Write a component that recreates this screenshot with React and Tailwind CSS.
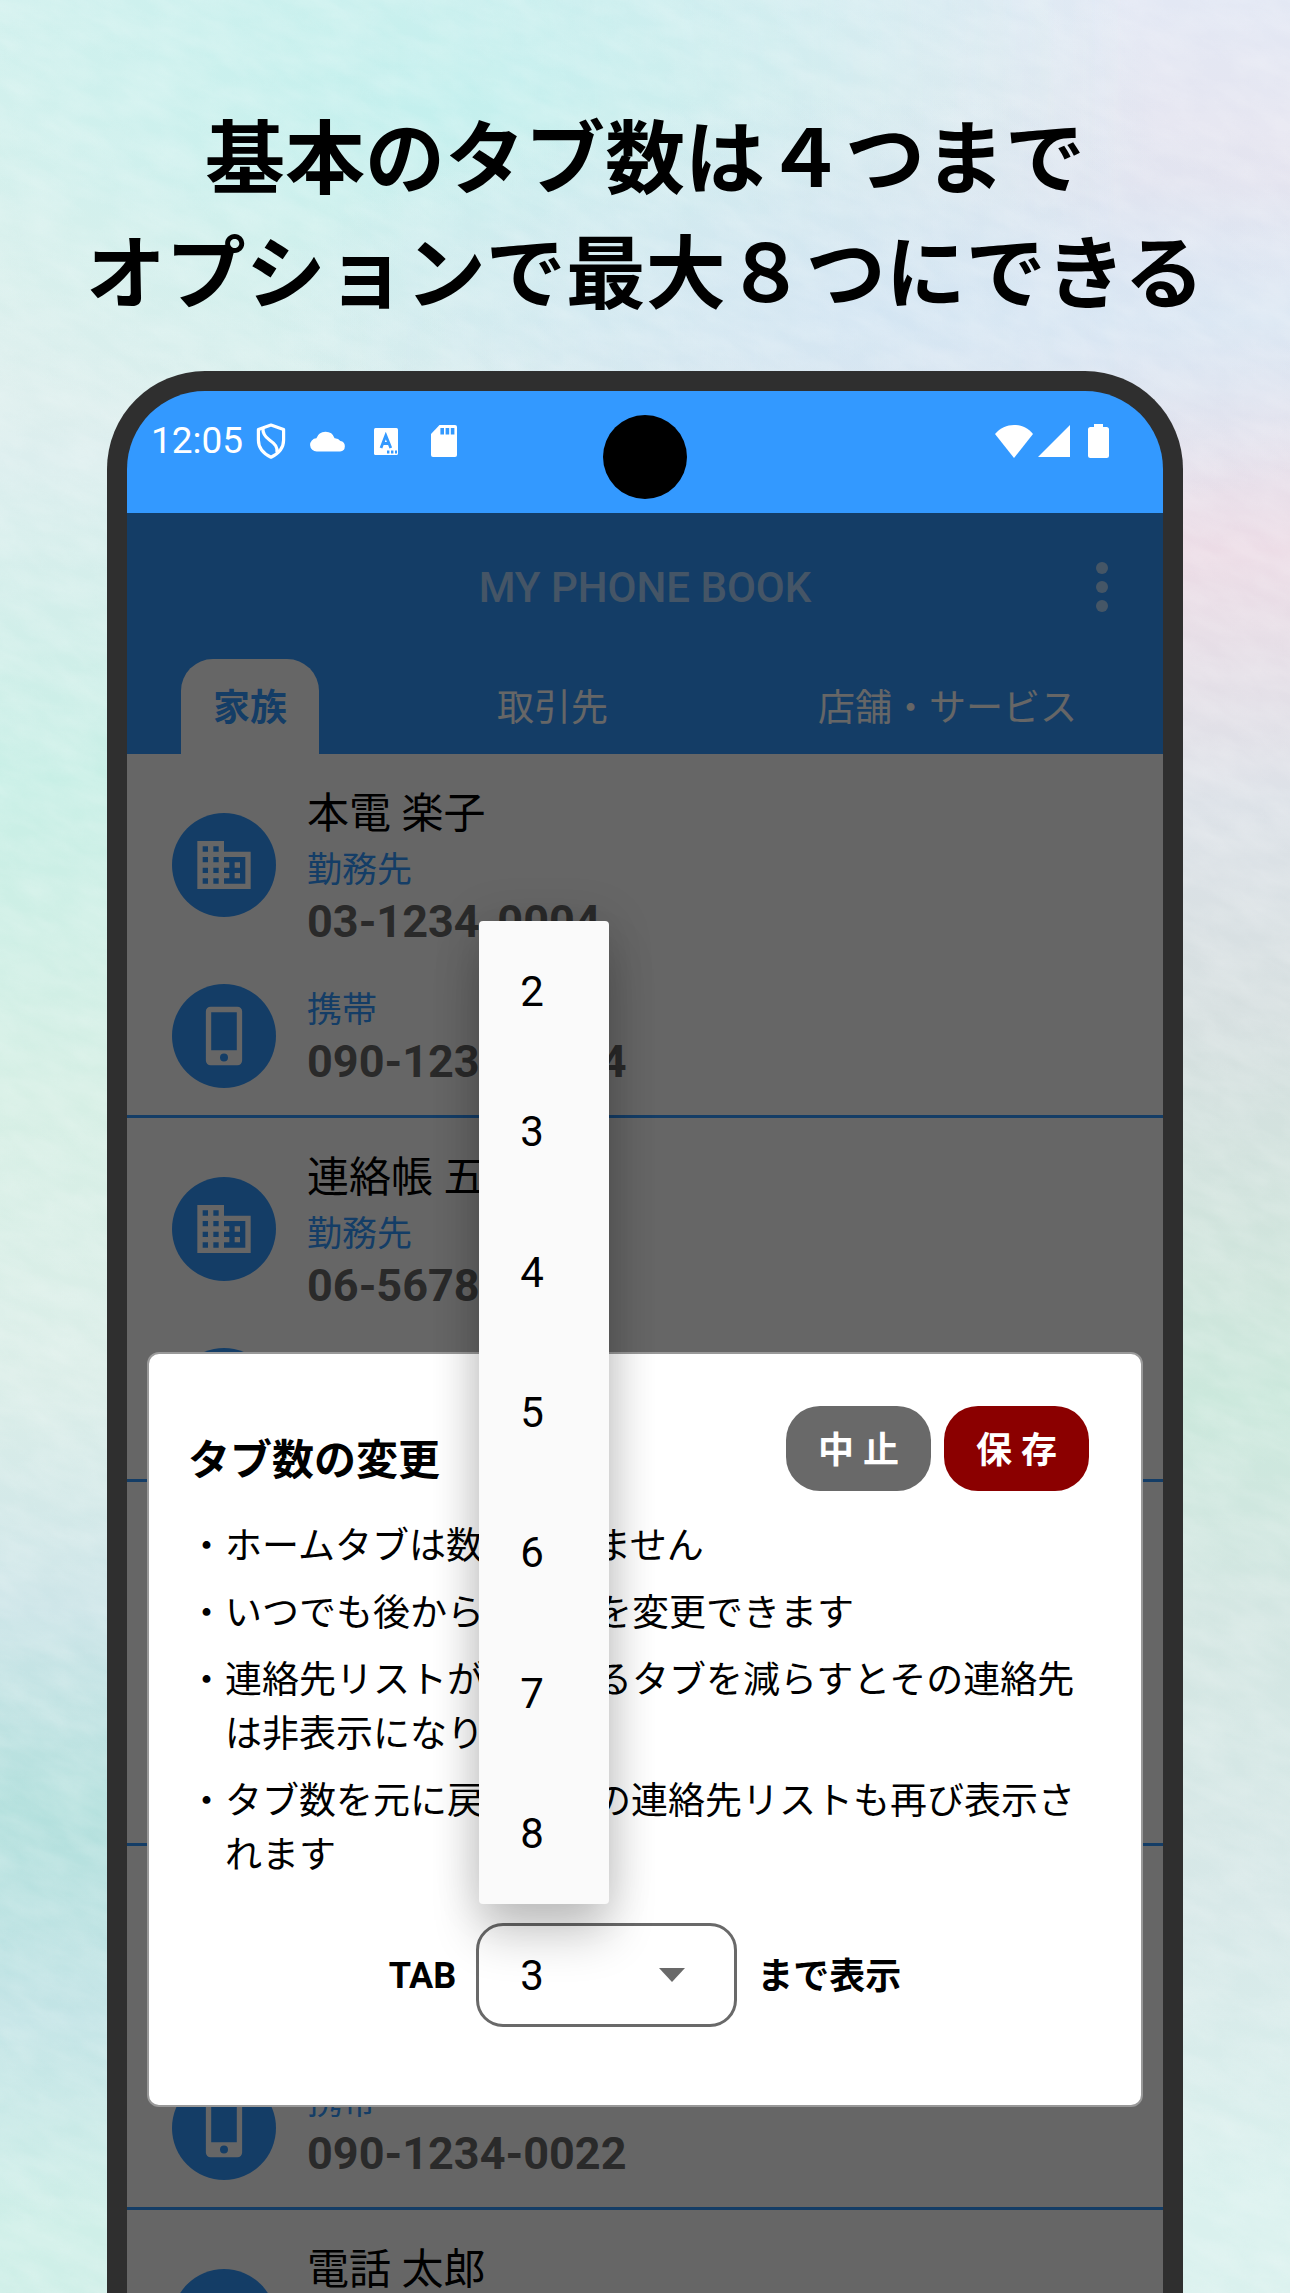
import React, { useState } from "react";
import { MdBusiness } from "react-icons/md";

const TABS = ["家族", "取引先", "店舗・サービス"];
const COUNTS = ["2", "3", "4", "5", "6", "7", "8"];
const CONTACTS = [
  { name: "本電 楽子", work: "03-1234-0004", mobile: "090-1234-0004" },
  { name: "連絡帳 五郎", work: "06-5678-0005", mobile: "090-1234-0005" },
  { name: "電話 花子", work: "03-1234-0011", mobile: "090-1234-0011" },
  { name: "本電 次郎", work: "03-1234-0022", mobile: "090-1234-0022" },
  { name: "電話 太郎", work: "03-1234-0033", mobile: "090-1234-0033" },
];
const NOTES = [
  "ホームタブは数に含みません",
  "いつでも後からタブ数を変更できます",
  "連絡先リストが存在するタブを減らすとその連絡先は非表示になります",
  "タブ数を元に戻すとその連絡先リストも再び表示されます",
];

function Backdrop() {
  return (
    <div aria-hidden="true" className="absolute inset-0 -z-10 overflow-hidden">
      <div className="absolute inset-0 bg-[linear-gradient(180deg,#d9f1ee_0%,#e0f0ec_10%,#dceeee_20%,#c8efe6_34%,#d6efe5_48%,#dceee9_60%,#cde5e8_70%,#b3e0dd_79%,#c3e4e6_88%,#cfefe8_97%)]" />
      <div className="absolute inset-0 bg-[linear-gradient(180deg,#e3e8f4_0%,#e6e4ef_8%,#dfe8f3_14%,#ecdce6_24%,#dde2e8_35%,#d6dfe0_44%,#cfe5dc_56%,#cbe8dc_61%,#d3e6e2_70%,#d7e8e8_83%,#daf1ee_96%)] [mask-image:linear-gradient(90deg,transparent_25%,black_88%)]" />
      <div className="absolute inset-x-0 top-0 h-[520px] bg-[radial-gradient(ellipse_at_34%_20%,#bdf0ee_0%,transparent_60%)] opacity-80" />
      <div className="absolute inset-x-0 top-0 h-[520px] bg-[radial-gradient(ellipse_at_68%_60%,#d2e4f3_0%,transparent_50%)] opacity-80" />
      <svg className="absolute inset-0 h-full w-full opacity-20">
        <filter id="paper">
          <feTurbulence type="fractalNoise" baseFrequency="0.02 0.05" numOctaves="4" seed="4" />
          <feColorMatrix values="0 0 0 0 1  0 0 0 0 1  0 0 0 0 1  1.6 0 0 0 -0.4" />
        </filter>
        <g transform="rotate(25)">
          <rect x="-200" y="-800" width="3200" height="3200" filter="url(#paper)" />
        </g>
      </svg>
    </div>
  );
}

function StatusBar() {
  return (
    <div className="relative flex h-[122px] shrink-0 items-start justify-between bg-[#3399ff] pt-[24px] pr-[54px] pl-[24px] text-white">
      <div className="flex h-[52px] items-center">
        <span className="text-[37px]">12:05</span>
        <svg viewBox="0 0 30 36" className="ml-[13px] h-[36px] w-[30px]" fill="none" stroke="currentColor" strokeWidth="3.2" strokeLinejoin="round">
          <path d="M15 2 27.6 6.4V17c0 7.400-4.600 13.400-12.600 17.200C7 30.400 2.400 24.400 2.400 17V6.400Z" />
          <path d="M7 5c-.5 5.500 1.500 8.500 6.500 12 6 4.200 8 7 7.500 12.500" />
        </svg>
        <svg viewBox="0 0 36 22" className="ml-[24px] h-[22px] w-[36px]" fill="currentColor">
          <path d="M7 21.500a6.600 6.600 0 0 1-.6-13.200A9.600 9.600 0 0 1 24.600 8.200 6.800 6.800 0 0 1 30.400 11a5.300 5.300 0 0 1-.3 10.500Z" />
        </svg>
        <svg viewBox="0 0 24 27" className="ml-[28px] h-[27px] w-[24px]">
          <rect width="24" height="27" rx="1.500" fill="currentColor" />
          <g fill="none" stroke="#3399ff" strokeWidth="2.800">
            <path d="M7 20 11.800 7.500 16.800 20M8.600 15.500h6.600" />
            <path d="M13 24h2.400M17 24h2.400M21 24h2" />
          </g>
        </svg>
        <svg viewBox="0 0 26 32" className="ml-[33px] h-[32px] w-[26px]">
          <path d="M8.500 0H24a2 2 0 0 1 2 2v28a2 2 0 0 1-2 2H2a2 2 0 0 1-2-2V9Z" fill="currentColor" />
          <path d="M11.200 3v6.500M16.400 3v6.500M21.600 3v6.500" stroke="#3399ff" strokeWidth="3.600" />
        </svg>
      </div>
      <div className="absolute top-[24px] left-1/2 size-[84px] -translate-x-1/2 rounded-full bg-black" />
      <div className="flex h-[52px] items-center">
        <svg viewBox="0 0 38 33" className="h-[33px] w-[38px]" fill="currentColor">
          <path d="M0 9C5 3 12 0 19 0s14 3 19 9L19 33Z" />
        </svg>
        <svg viewBox="0 0 32 32" className="ml-[5px] size-[32px]" fill="currentColor">
          <path d="M32 0v32H0Z" />
        </svg>
        <svg viewBox="0 0 21 34" className="ml-[18px] h-[34px] w-[21px]" fill="currentColor">
          <path d="M6 0h9v3h3.500A2.500 2.500 0 0 1 21 5.500v26a2.500 2.500 0 0 1-2.500 2.500h-16A2.500 2.500 0 0 1 0 31.500v-26A2.500 2.500 0 0 1 2.500 3H6Z" />
        </svg>
      </div>
    </div>
  );
}

function PhoneGlyph() {
  return (
    <svg viewBox="0 0 24 24" className="size-[64px]" fill="currentColor">
      <path
        fillRule="evenodd"
        d="M7 1h10a1.800 1.800 0 0 1 1.800 1.800v18.400A1.800 1.800 0 0 1 17 23H7a1.800 1.800 0 0 1-1.800-1.800V2.800A1.800 1.800 0 0 1 7 1ZM7.200 3.100v14.200h9.600V3.100ZM12 18.600a1.500 1.500 0 1 0 0 3 1.500 1.500 0 0 0 0-3Z"
      />
    </svg>
  );
}

function Badge({ children }) {
  return (
    <span className="flex size-[104px] shrink-0 items-center justify-center rounded-full bg-[#3399ff] text-white">
      {children}
    </span>
  );
}

function Contact({ name, work, mobile }) {
  return (
    <li className="border-b-3 border-[#3399ff] pt-[30px] pb-[27px] pl-[45px]">
      <div className="flex items-center gap-[31px]">
        <Badge>
          <MdBusiness className="size-[64px]" />
        </Badge>
        <div>
          <h2 className="text-[42px] leading-[60px] text-black">{name}</h2>
          <p className="text-[35px] leading-[54px] text-[#3399ff]">勤務先</p>
          <p className="text-[45px] leading-[48px] font-bold text-[#696969]">{work}</p>
        </div>
      </div>
      <div className="mt-[38px] flex items-start gap-[31px]">
        <Badge>
          <PhoneGlyph />
        </Badge>
        <div>
          <p className="text-[35px] leading-[54px] text-[#3399ff]">携帯</p>
          <p className="text-[45px] leading-[48px] font-bold text-[#696969]">{mobile}</p>
        </div>
      </div>
    </li>
  );
}

function CountPicker({ value, onChange }) {
  return (
    <div className="relative">
      <select
        id="tab-count"
        value={value}
        onChange={(e) => onChange(e.target.value)}
        className="block h-[104px] w-[261px] appearance-none rounded-[27px] border-3 border-[#696969] bg-white pl-[41px] text-[42px] text-black"
      >
        {COUNTS.map((c) => (
          <option key={c}>{c}</option>
        ))}
      </select>
      <svg viewBox="0 0 26 14" className="pointer-events-none absolute top-[45px] right-[52px] h-[14px] w-[26px]" fill="#696969">
        <path d="M0 0h26L13 14Z" />
      </svg>
      <div
        role="listbox"
        aria-label="タブ数"
        className="absolute bottom-full left-[3px] mb-[19px] grid h-[983px] w-[130px] auto-rows-fr rounded-[4px] bg-[#fafafa] shadow-[0_0_48px_rgba(0,0,0,0.14),0_32px_48px_rgba(0,0,0,0.2)]"
      >
        {COUNTS.map((c) => (
          <button
            key={c}
            type="button"
            role="option"
            aria-selected={c === value}
            onClick={() => onChange(c)}
            className="block w-full pl-[41px] text-left text-[42px] text-black"
          >
            {c}
          </button>
        ))}
      </div>
    </div>
  );
}

function TabCountDialog() {
  const [count, setCount] = useState("3");
  return (
    <section
      role="dialog"
      aria-labelledby="dialog-title"
      className="absolute inset-x-[20px] top-[839px] rounded-[12px] border-2 border-[#999999] bg-white px-[39px] pt-[52px] pb-[78px] text-black"
    >
      <header className="flex items-start justify-between pr-[13px]">
        <h2 id="dialog-title" className="pt-[24px] text-[42px] leading-[62px] font-bold">
          タブ数の変更
        </h2>
        <div className="flex gap-[13px]">
          <button type="button" className="h-[85px] w-[145px] rounded-[34px] bg-[#696969] pt-[4px] text-[36px] font-bold text-white">
            中 止
          </button>
          <button type="button" className="h-[85px] w-[145px] rounded-[34px] bg-[#8b0000] pt-[4px] text-[36px] font-bold text-white">
            保 存
          </button>
        </div>
      </header>
      <ul className="mt-[28px] flex flex-col gap-[13px] text-[37px] leading-[54px]">
        {NOTES.map((n) => (
          <li key={n} className="flex">
            <span className="shrink-0">・</span>
            <span>{n}</span>
          </li>
        ))}
      </ul>
      <div className="mt-[40px] flex items-center justify-center gap-[20px] text-[36px] font-bold">
        <label htmlFor="tab-count" className="pt-[2px]">
          TAB
        </label>
        <div className="font-normal">
          <CountPicker value={count} onChange={setCount} />
        </div>
        <span className="pt-[4px]">まで表示</span>
      </div>
    </section>
  );
}

export default function App() {
  return (
    <main
      lang="ja"
      className="relative isolate flex h-screen flex-col overflow-hidden font-['Roboto','Noto_Sans_CJK_JP',sans-serif]"
    >
      <Backdrop />
      <h1 className="shrink-0 pt-[95px] text-center font-['Noto_Sans_CJK_JP',sans-serif] text-[80px] leading-[115px] font-bold text-black">
        基本のタブ数は４つまで
        <br />
        オプションで最大８つにできる
      </h1>
      <div className="mx-[107px] mt-[46px] flex min-h-0 flex-1 flex-col overflow-hidden rounded-t-[98px] border-x-20 border-t-20 border-[#2f2f2f] bg-[#2f2f2f]">
        <StatusBar />
        <div className="relative min-h-0 flex-1 overflow-hidden bg-white">
          <header className="bg-[#3399ff]">
            <div className="relative flex h-[146px] items-center justify-center pt-[2px] text-white/60">
              <div className="text-[42px] font-medium">MY PHONE BOOK</div>
              <button type="button" aria-label="メニュー" className="absolute right-[55px] flex flex-col gap-[7px]">
                <span className="size-[12px] rounded-full bg-current" />
                <span className="size-[12px] rounded-full bg-current" />
                <span className="size-[12px] rounded-full bg-current" />
              </button>
            </div>
            <nav className="flex h-[95px] items-stretch justify-between px-[54px]">
              {TABS.map((t, i) => (
                <button
                  key={t}
                  type="button"
                  className={
                    i === 0
                      ? "rounded-t-[32px] bg-white px-[32px] pt-[5px] text-[37px] font-bold text-[#3399ff]"
                      : "px-[32px] pt-[5px] text-[37px] text-white"
                  }
                >
                  {t}
                </button>
              ))}
            </nav>
          </header>
          <ul>
            {CONTACTS.map((c) => (
              <Contact key={c.name} {...c} />
            ))}
          </ul>
          <div className="absolute inset-0 bg-black/60" />
          <TabCountDialog />
        </div>
      </div>
    </main>
  );
}
